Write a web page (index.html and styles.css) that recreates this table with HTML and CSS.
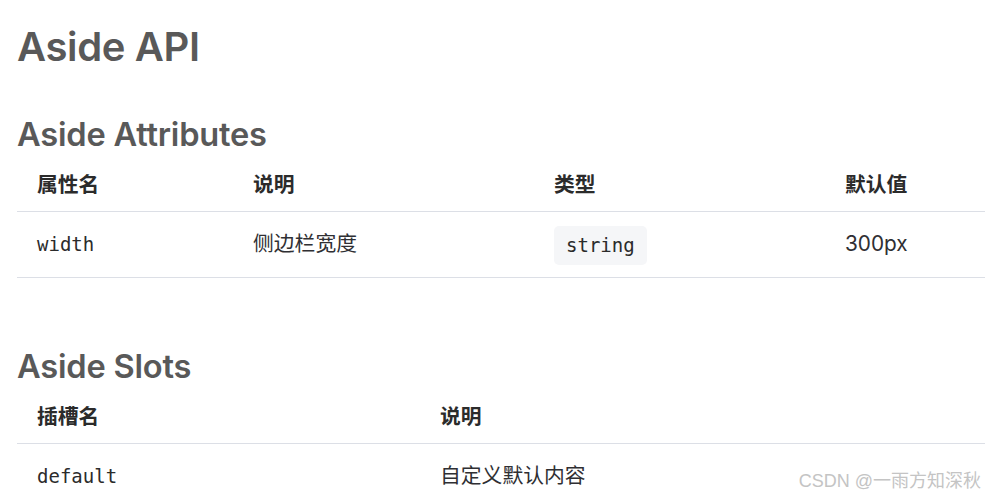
FILE: index.html
```html
<!DOCTYPE html>
<html lang="zh-CN">
<head>
<meta charset="utf-8">
<title>Aside API</title>
<link rel="stylesheet" href="styles.css">
</head>
<body>
<main class="doc">
  <h1 class="title">Aside API</h1>
  <h2 class="section">Aside Attributes</h2>
  <table class="api-table">
    <colgroup>
      <col class="c-attr-1"><col class="c-attr-2"><col class="c-attr-3"><col class="c-attr-4">
    </colgroup>
    <thead>
      <tr><th>属性名</th><th>说明</th><th>类型</th><th>默认值</th></tr>
    </thead>
    <tbody>
      <tr>
        <td><code class="mono">width</code></td>
        <td>侧边栏宽度</td>
        <td><code class="mono badge">string</code></td>
        <td>300px</td>
      </tr>
    </tbody>
  </table>

  <h2 class="section section-gap">Aside Slots</h2>
  <table class="api-table">
    <colgroup>
      <col class="c-slot-1"><col class="c-slot-2">
    </colgroup>
    <thead>
      <tr><th>插槽名</th><th>说明</th></tr>
    </thead>
    <tbody>
      <tr>
        <td><code class="mono">default</code></td>
        <td>自定义默认内容</td>
      </tr>
    </tbody>
  </table>
</main>
<div class="watermark">CSDN @一雨方知深秋</div>
</body>
</html>
```

FILE: styles.css
```css
html, body {
  margin: 0;
  padding: 0;
  background: #ffffff;
}

body {
  font-family: Inter, "Noto Sans CJK SC", sans-serif;
  color: #2f2f33;
  overflow: hidden;
}

.doc {
  padding: 23px 0 0 17px;
}

.title {
  margin: 0;
  font-size: 40px;
  line-height: 48px;
  font-weight: 600;
  color: #595959;
  letter-spacing: -0.35px;
}

.section {
  margin: 43px 0 0 0;
  font-size: 32.6px;
  line-height: 40px;
  font-weight: 600;
  color: #595959;
  letter-spacing: -0.2px;
}

.section-gap {
  margin-top: 68px;
}

.api-table {
  width: 100%;
  border-collapse: collapse;
  table-layout: fixed;
}

.c-attr-1 { width: 216px; }
.c-attr-2 { width: 301px; }
.c-attr-3 { width: 291px; }
.c-attr-4 { width: auto; }
.c-slot-1 { width: 403px; }
.c-slot-2 { width: auto; }

.api-table th {
  text-align: left;
  padding: 12px 20px 8px;
  line-height: 37px;
  font-size: 20.8px;
  font-weight: 700;
  color: #2b2b2b;
  border-bottom: 1px solid #dcdfe6;
}

.api-table td {
  padding: 12px 20px;
  line-height: 40px;
  font-size: 20.8px;
  color: #2f2f33;
  border-bottom: 1px solid #dcdfe6;
  white-space: nowrap;
}

.mono {
  font-family: "DejaVu Sans Mono", "Liberation Mono", monospace;
  font-size: 19px;
  color: #2b2b2b;
}

.badge {
  display: inline-block;
  padding: 0 12px;
  line-height: 39px;
  background: #f5f6f8;
  border-radius: 5px;
  vertical-align: middle;
}

.watermark {
  position: absolute;
  right: 4px;
  bottom: 6px;
  font-family: "Liberation Sans", "Noto Sans CJK SC", sans-serif;
  font-size: 18px;
  color: #c4c4c4;
}
```
